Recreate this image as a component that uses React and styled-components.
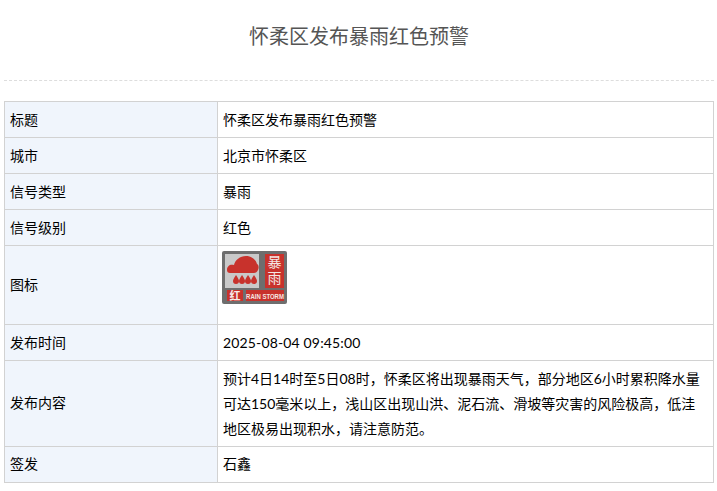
import React from "react"
import styled, { createGlobalStyle } from "styled-components"

const rows = [
  { label: "标题", value: "怀柔区发布暴雨红色预警" },
  { label: "城市", value: "北京市怀柔区" },
  { label: "信号类型", value: "暴雨" },
  { label: "信号级别", value: "红色" },
  { label: "图标", icon: true },
  { label: "发布时间", value: "2025-08-04 09:45:00", date: true },
  {
    label: "发布内容",
    long: true,
    value:
      "预计4日14时至5日08时，怀柔区将出现暴雨天气，部分地区6小时累积降水量可达150毫米以上，浅山区出现山洪、泥石流、滑坡等灾害的风险极高，低洼地区极易出现积水，请注意防范。",
  },
  { label: "签发", value: "石鑫" },
]

const cjk = "Noto Sans CJK SC, sans-serif"

function StormIcon() {
  return (
    <svg width="65" height="53" viewBox="0 0 65 53" style={{ display: "block" }}>
      <rect width="65" height="53" rx="2" fill="#6e6e6e" />
      <rect x="3" y="3" width="34" height="34" fill="#c9c9c9" />
      <path
        d="M5 19c0-4 3-6 7-5 1-5 6-9 12-9 6 0 10 4 11 8 2 1 2 4 1 6-1 2-2 3-4 3H8c-2 0-3-1-3-3z"
        fill="#c8322c"
      />
      {[14, 20, 26, 32].map((x) => (
        <path key={x} d={`M${x} 24c2 3 3 5 3 6a3 3 0 0 1-6 0c0-1 1-3 3-6z`} fill="#c8322c" />
      ))}
      <rect x="43" y="3" width="19" height="34" fill="#c8322c" />
      <text
        x="52.5"
        y="4"
        writingMode="vertical-rl"
        fontSize="14"
        letterSpacing="2"
        fill="#f4e6e2"
        fontFamily={cjk}
      >
        暴雨
      </text>
      <rect x="5" y="39" width="16" height="11" fill="#c8322c" />
      <text x="13" y="49" textAnchor="middle" fontSize="11" fontWeight="700" fill="#f7ebe8" fontFamily={cjk}>红</text>
      <rect x="24" y="39" width="38" height="11" fill="#c8322c" />
      <text
        transform="translate(43 47.5) scale(1 1.3)"
        textAnchor="middle"
        fontSize="6"
        fontWeight="700"
        fill="#f4e6e2"
        fontFamily="Liberation Sans, sans-serif"
      >
        RAIN STORM
      </text>
    </svg>
  )
}

export default function App() {
  return (
    <Page>
      <GlobalStyle />
      <Header>
        <Title>怀柔区发布暴雨红色预警</Title>
      </Header>
      <InfoTable>
        <colgroup>
          <col width="213" />
          <col />
        </colgroup>
        <tbody>
          {rows.map((row) => (
            <tr key={row.label}>
              <LabelCell>{row.label}</LabelCell>
              <ValueCell $long={row.long} $icon={row.icon} $date={row.date}>
                {row.icon ? <StormIcon /> : row.value}
              </ValueCell>
            </tr>
          ))}
        </tbody>
      </InfoTable>
    </Page>
  )
}

const GlobalStyle = createGlobalStyle`
  body {
    margin: 0;
    background: #fff;
    font-family: Lato, "Noto Sans CJK SC", sans-serif;
  }
`

const Page = styled.div`
  padding: 0 3px 0 4px;
`

const Header = styled.div`
  height: 81px;
  border-bottom: 1px dashed #ddd;
  margin-bottom: 20px;
  display: flex;
  justify-content: center;
  padding-top: 21px;
  box-sizing: border-box;
`

const Title = styled.h1`
  margin: 0;
  font-size: 20px;
  font-weight: 400;
  line-height: 30px;
  color: #555;
`

const InfoTable = styled.table`
  width: 710px;
  border-collapse: collapse;
  table-layout: fixed;
  font-size: 14px;
  color: #000;
`

const LabelCell = styled.td`
  border: 1px solid #d2d2d2;
  background: #f0f5fc;
  padding: 0 5px;
  height: 35px;
  line-height: 20px;
`

const ValueCell = styled.td`
  border: 1px solid #d2d2d2;
  padding: ${(p) => (p.$icon ? "5px 5px 20px 4px" : p.$long ? "5px 5px 4px" : "0 5px")};
  line-height: ${(p) => (p.$long ? "25.2px" : "20px")};
  letter-spacing: ${(p) => (p.$date ? "0.15px" : "0")};
`
